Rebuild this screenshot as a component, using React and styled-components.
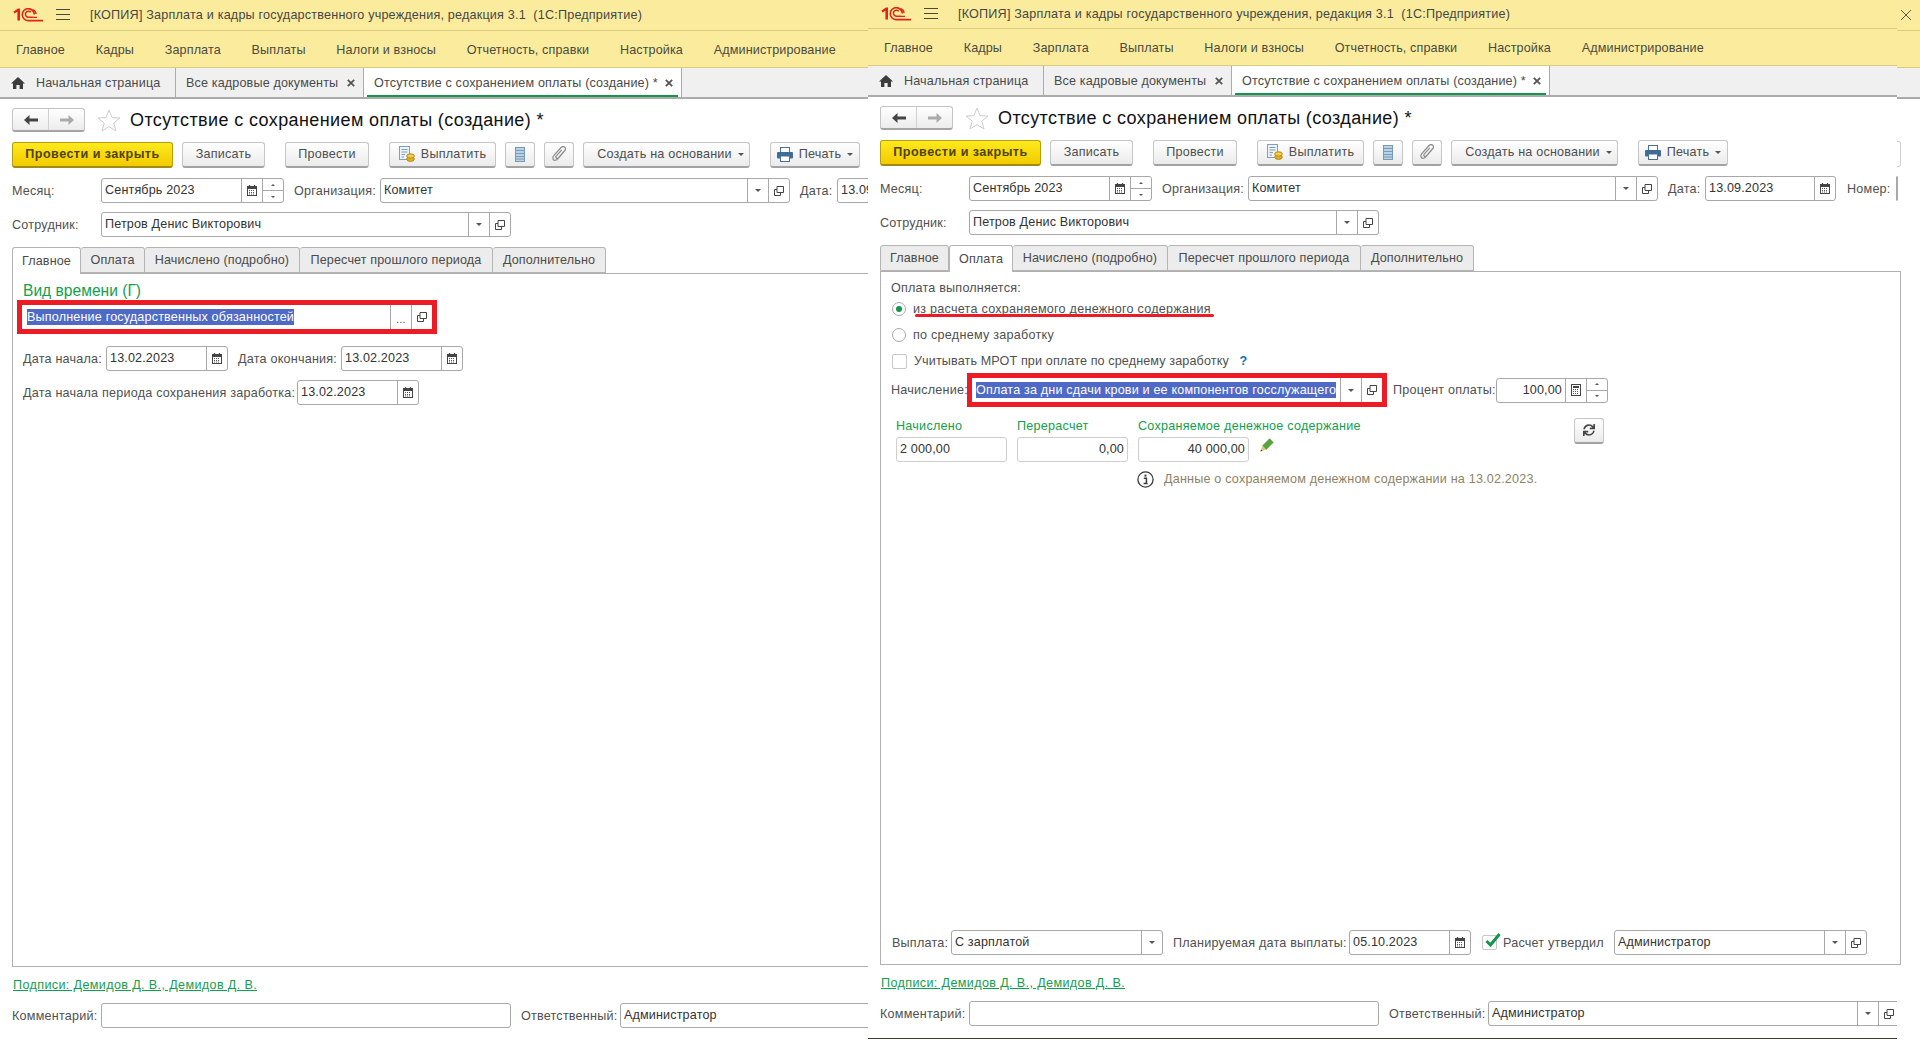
import React from 'react';
import styled, { createGlobalStyle } from 'styled-components';
import { FaSync } from 'react-icons/fa';

const GlobalStyle = createGlobalStyle`
  html, body {
    margin: 0;
    padding: 0;
    background: #fff;
    overflow: hidden;
  }
  body {
    font-family: "Liberation Sans", Arial, sans-serif;
    font-size: 12.6px;
    letter-spacing: 0.2px;
    color: #4a4a4a;
  }
  * {
    box-sizing: border-box;
  }
`;

const Page = styled.div`
  display: flex;
  width: 1920px;
  height: 1041px;
  overflow: hidden;
`;

const Pane = styled.div`
  flex: none;
  width: ${props => props.$w}px;
  height: 1041px;
  display: flex;
  flex-direction: column;
  overflow: ${props => (props.$clip ? 'hidden' : 'visible')};
  position: relative;
  z-index: ${props => props.$z || 0};
`;

const Strip = styled.div`
  flex: none;
  width: 23px;
  display: flex;
  flex-direction: column;
`;

const TitleBar = styled.div`
  flex: none;
  height: ${props => props.$h}px;
  background: #fbec9d;
  border-bottom: 1px solid #d9cb80;
  display: flex;
  align-items: center;
  padding-left: ${props => props.$pl || 13}px;
`;

const WindowTitle = styled.span`
  margin-left: 20px;
  white-space: pre;
  color: #464646;
  letter-spacing: 0.2px;
`;

const MenuBar = styled.div`
  flex: none;
  height: 37px;
  background: #fbec9d;
  border-bottom: 1px solid #d9cb80;
  display: flex;
  align-items: center;
  padding: 2px 0 0 16px;
  gap: 30.8px;
`;

const MenuItem = styled.span`
  white-space: nowrap;
  color: #4a4a40;
  letter-spacing: 0.11px;
`;

const TabBar = styled.div`
  flex: none;
  height: 31px;
  background: #f0f0f0;
  border-bottom: 2px solid #ababab;
  display: flex;
`;

const PageTab = styled.div`
  position: relative;
  flex: none;
  width: ${props => props.$w}px;
  display: flex;
  align-items: center;
  border-right: 1px solid #ababab;
  padding: 1px ${props => props.$pr || 8}px 0 ${props => props.$pl || 10}px;
  white-space: pre;
  color: #4a4a4a;
  background: ${props => (props.$active ? '#fff' : 'transparent')};
  &::after {
    content: '';
    display: ${props => (props.$active ? 'block' : 'none')};
    position: absolute;
    left: 3px;
    right: 3px;
    bottom: 0;
    height: 2px;
    background: #12964c;
  }
`;

const TabText = styled.span`
  flex: 1;
  letter-spacing: 0.14px;
`;

const Form = styled.div`
  flex: 1;
  display: flex;
  flex-direction: column;
  padding: 9px 0 0 12px;
`;

const NavRow = styled.div`
  flex: none;
  height: 24px;
  display: flex;
  align-items: center;
`;

const NavGroup = styled.div`
  width: 73px;
  height: 24px;
  display: flex;
  border: 1px solid #c4c4c4;
  border-bottom: 2px solid #a4a4a4;
  border-radius: 3px;
  background: linear-gradient(#fff, #ececec);
`;

const NavCell = styled.div`
  flex: 1;
  display: flex;
  align-items: center;
  justify-content: center;
  & + & {
    border-left: 1px solid #d0d0d0;
  }
`;

const FormTitle = styled.h1`
  margin: 0 0 0 9px;
  font-weight: normal;
  font-size: 18px;
  letter-spacing: 0.39px;
  color: #111;
  white-space: nowrap;
`;

const StarWrap = styled.span`
  margin-left: 12px;
  display: flex;
`;

const Toolbar = styled.div`
  flex: none;
  display: flex;
  height: 26px;
  margin-top: 10px;
`;

const Btn = styled.div`
  flex: none;
  width: ${props => props.$w}px;
  margin-left: ${props => props.$ml || 0}px;
  height: 26px;
  display: flex;
  align-items: center;
  justify-content: center;
  gap: 6px;
  padding: 0 0 1px ${props => props.$pl || 0}px;
  border: 1px solid #c6c6c6;
  border-bottom: 2px solid #a2a2a2;
  border-radius: 3px;
  background: linear-gradient(#fff, #ebebeb);
  color: #4e4e4e;
  white-space: nowrap;
`;

const PrimaryBtn = styled(Btn)`
  border: 1px solid #b59f10;
  border-bottom: 2px solid #a08c10;
  background: linear-gradient(#fdea1e, #f3ca00);
  color: #4f4300;
  font-weight: bold;
  letter-spacing: 0.45px;
`;

const Row = styled.div`
  flex: none;
  display: flex;
  align-items: center;
  gap: 6px;
  height: 25px;
  margin-top: ${props => props.$mt || 0}px;
  margin-left: ${props => props.$ml || 0}px;
`;

const TallRow = styled(Row)`
  height: 34px;
`;

const FooterRow = styled(Row)`
  width: ${props => props.$w}px;
  overflow: hidden;
`;

const Label = styled.span`
  flex: none;
  width: ${props => props.$w}px;
  margin-left: ${props => props.$ml || 0}px;
  white-space: nowrap;
  color: #505050;
  letter-spacing: 0.21px;
`;

const FieldBox = styled.div`
  flex: none;
  width: ${props => props.$w}px;
  height: 25px;
  display: flex;
  border: 1px solid ${props => (props.$light ? '#cfcfcf' : '#a8a8a8')};
  border-radius: 3px;
  background: #fff;
`;

const FieldText = styled.div`
  flex: 1;
  min-width: 0;
  overflow: hidden;
  white-space: nowrap;
  padding: 0 3px;
  line-height: 22px;
  color: #333;
  text-align: ${props => (props.$right ? 'right' : 'left')};
  letter-spacing: 0.14px;
`;

const FieldBtn = styled.div`
  flex: none;
  width: 21px;
  display: flex;
  align-items: center;
  justify-content: center;
  border-left: 1px solid #a8a8a8;
`;

const Spin = styled.div`
  flex: none;
  width: 21px;
  display: flex;
  flex-direction: column;
  border-left: 1px solid #a8a8a8;
`;

const SpinCell = styled.div`
  flex: 1;
  display: flex;
  align-items: center;
  justify-content: center;
  & + & {
    border-top: 1px solid #a8a8a8;
  }
`;

const SubTabs = styled.div`
  flex: none;
  display: flex;
  height: 27px;
  margin-top: 10px;
  position: relative;
  z-index: 1;
`;

const SubTab = styled.div`
  flex: none;
  width: ${props => props.$w}px;
  height: ${props => (props.$active ? 27 : 26)}px;
  display: flex;
  align-items: center;
  justify-content: center;
  border: 1px solid #b4b4b4;
  border-left-width: ${props => (props.$first || props.$active ? 1 : 0)}px;
  border-bottom: ${props => (props.$active ? 'none' : '1px solid #b4b4b4')};
  border-radius: 3px 3px 0 0;
  background: ${props => (props.$active ? '#fff' : '#ececec')};
  color: #4a4a4a;
  white-space: nowrap;
  letter-spacing: 0.12px;
`;

const Panel = styled.div`
  flex: none;
  width: ${props => props.$w}px;
  height: 694px;
  margin-top: -1px;
  display: flex;
  flex-direction: column;
  border: 1px solid #b0b0b0;
  padding: ${props => props.$pt}px 10px 9px;
`;

const GroupTitle = styled.div`
  height: 19px;
  line-height: 19px;
  color: #12a04e;
  font-size: 15.6px;
  letter-spacing: 0;
`;

const RedBox = styled.div`
  flex: none;
  width: 420px;
  height: 34px;
  margin-left: ${props => props.$ml || 0}px;
  display: flex;
  border: 5px solid #ed1c24;
  background: #fff;
`;

const RedText = styled.div`
  flex: 1;
  min-width: 0;
  white-space: nowrap;
  padding: 4px 3px 0 ${props => props.$pl || 5}px;
  line-height: 16px;
`;

const Selected = styled.span`
  display: inline-block;
  max-width: 100%;
  overflow: hidden;
  vertical-align: top;
  background: #4f69c6;
  color: #fff;
  letter-spacing: 0.17px;
`;

const Dots = styled.span`
  color: #555;
  font-size: 11px;
  padding-top: 4px;
`;

const Caption = styled.div`
  height: 16px;
  line-height: 16px;
  color: #505050;
`;

const OptionRow = styled.div`
  position: relative;
  height: 26px;
  display: flex;
  align-items: center;
  gap: 7px;
  margin-left: 1px;
  color: #505050;
  letter-spacing: ${props => props.$ls || 0.25}px;
  white-space: pre;
`;

const Radio = styled.span`
  flex: none;
  width: 14px;
  height: 14px;
  border: 1px solid #a8a8a8;
  border-radius: 50%;
  display: flex;
  align-items: center;
  justify-content: center;
  &::after {
    content: '';
    display: ${props => (props.$on ? 'block' : 'none')};
    width: 6px;
    height: 6px;
    border-radius: 50%;
    background: #12964c;
  }
`;

const CheckBox = styled.span`
  flex: none;
  width: 15px;
  height: 15px;
  margin-left: ${props => props.$ml || 0}px;
  border: 1px solid #c8c8c8;
  border-radius: 2px;
  display: flex;
  position: relative;
`;

const Underline = styled.span`
  position: absolute;
  left: 23px;
  top: 18px;
  width: 299px;
  height: 3px;
  border-radius: 2px;
  background: #ed1c24;
`;

const Help = styled.span`
  color: #0e6fb5;
  font-weight: bold;
`;

const SumRow = styled.div`
  flex: none;
  display: flex;
  margin: 11px 0 0 5px;
  gap: 10px;
`;

const SumCol = styled.div`
  flex: none;
  width: 111px;
  display: flex;
  flex-direction: column;
  gap: 3px;
`;

const GreenLabel = styled.div`
  height: 16px;
  line-height: 16px;
  color: #12a04e;
  white-space: nowrap;
  letter-spacing: 0.24px;
`;

const PencilCell = styled.div`
  flex: none;
  width: 14px;
  margin-left: 1px;
  padding-top: 20px;
`;

const InfoRow = styled.div`
  flex: none;
  display: flex;
  align-items: center;
  gap: 10px;
  height: 18px;
  margin: 8px 0 0 246px;
  color: #8d8264;
  letter-spacing: 0.19px;
`;

const BottomRow = styled(Row)`
  margin-top: auto;
`;

const FooterLink = styled.a`
  flex: none;
  height: 16px;
  line-height: 15px;
  margin: 11px 0 9px 1px;
  color: #12a04e;
  text-decoration: underline;
  white-space: nowrap;
  letter-spacing: 0.36px;
`;

const BottomRule = styled.div`
  flex: none;
  height: 1px;
  margin: 12px 0 0 -12px;
  background: #3b3b2c;
`;

const GhostBtn = styled.div`
  width: 4px;
  height: 26px;
  margin-top: 42px;
  border: 1px solid #d0d0d0;
  border-left: none;
  border-radius: 0 3px 3px 0;
`;

const Spacer = styled.span`
  flex: none;
  width: ${props => props.$w}px;
`;

/* иконки */
const Logo = () => (
  <svg width="30" height="14" viewBox="0 0 30 14" fill="none">
    <path d="M0.5 3.5 L5 0.6 H7 V12.6 H4.4 V3.8 L1.5 5.5 Z" fill="#e2231a" />
    <path d="M19.5 9.2 H15 A3 3 0 1 1 17.8 4.4" stroke="#e2231a" strokeWidth="1.5" />
    <path d="M21.3 6.5 A6 6 0 1 0 15 12.6 H30" stroke="#e2231a" strokeWidth="1.6" />
    <path d="M24 9.4 H19 M19.6 1.6 A5 5 0 0 1 23 6" stroke="#e2231a" strokeWidth="1.4" />
  </svg>
);

const Burger = () => (
  <svg width="14" height="12" viewBox="0 0 14 12">
    <path d="M0 .5H14M0 5.5H14M0 10.5H14" stroke="#4a4a3c" strokeWidth="1" />
  </svg>
);

const HomeIcon = () => (
  <svg width="14" height="12" viewBox="0 0 14 12" style={{ marginRight: 11 }}>
    <path d="M7 0 L14 6.4 H12 V12 H8.6 V8 H5.4 V12 H2 V6.4 H0 Z" fill="#3c3c3c" />
  </svg>
);

const CloseIcon = () => (
  <svg width="8" height="8" viewBox="0 0 8 8">
    <path d="M.8 .8L7.2 7.2M7.2 .8L.8 7.2" stroke="#555" strokeWidth="1.8" />
  </svg>
);

const BigClose = () => (
  <svg width="10" height="10" viewBox="0 0 10 10" style={{ marginLeft: 3 }}>
    <path d="M0 0L10 10M10 0L0 10" stroke="#5a5a50" strokeWidth="1" />
  </svg>
);

const ArrowIcon = ({ color, flip }) => (
  <svg width="14" height="10" viewBox="0 0 14 10" style={{ transform: flip ? 'scaleX(-1)' : 'none' }}>
    <path d="M5.5 0 V3.5 H14 V6.5 H5.5 V10 L0 5 Z" fill={color} />
  </svg>
);

const StarIcon = () => (
  <svg width="24" height="23" viewBox="0 0 24 23">
    <path d="M12 1 L15 8.6 L23 9 L16.8 14 L19 22 L12 17.6 L5 22 L7.2 14 L1 9 L9 8.6 Z" fill="#fff" stroke="#cdcdcd" strokeWidth="1" />
  </svg>
);

const PayIcon = () => (
  <svg width="16" height="16" viewBox="0 0 16 16">
    <rect x=".5" y=".5" width="10" height="13" fill="#eef3f8" stroke="#7f9fbd" />
    <path d="M2.5 3.5H8.5M2.5 6H8.5M2.5 8.5H6M2.5 11H5" stroke="#7f9fbd" />
    <ellipse cx="11.5" cy="13" rx="3.8" ry="2.4" fill="#e3b023" stroke="#b78612" />
    <ellipse cx="11.5" cy="10" rx="3.8" ry="2.2" fill="#f4ce4a" stroke="#b78612" />
  </svg>
);

const ListIcon = () => (
  <svg width="10" height="15" viewBox="0 0 10 15">
    <rect x=".5" y=".5" width="9" height="14" fill="#b9d3e6" stroke="#7a99b3" />
    <path d="M1 3.5H9M1 6.5H9M1 9.5H9M1 12H9" stroke="#7a99b3" />
  </svg>
);

const ClipIcon = () => (
  <svg width="15" height="16" viewBox="0 0 15 16" fill="none">
    <path d="M13.5 3.8 L6 12.6 C4.6 14.4 2.2 14.8 1.4 13.6 C.4 12.4 1 10.6 2.2 9.2 L8.6 2 C10 .4 11.8 .4 12.8 1.2 C13.8 2.2 13.6 3.6 12.4 5 L6.6 11.6 C5.8 12.4 4.8 12.6 4.2 12 C3.6 11.4 3.8 10.4 4.6 9.6 L9.8 3.8" stroke="#8a8a8a" strokeWidth="1.2" />
  </svg>
);

const PrintIcon = () => (
  <svg width="16" height="15" viewBox="0 0 16 15">
    <rect x="3.5" y=".5" width="9" height="5" fill="#fff" stroke="#4a6f94" />
    <rect x="0" y="5" width="16" height="6.5" rx="1" fill="#3f6c97" />
    <rect x="3.5" y="9" width="9" height="5.5" fill="#fff" stroke="#4a6f94" />
  </svg>
);

const SmallCaret = ({ up }) => (
  <svg width="4" height="2" viewBox="0 0 4 2" style={{ transform: up ? 'rotate(180deg)' : 'none' }}>
    <path d="M0 0H4L2 2Z" fill="#555" />
  </svg>
);

const Caret = () => (
  <svg width="6" height="3" viewBox="0 0 6 3">
    <path d="M0 0H6L3 3Z" fill="#555" />
  </svg>
);

const CalendarIcon = () => (
  <svg width="10" height="11" viewBox="0 0 10 11">
    <path d="M2.5 0V2M7.5 0V2" stroke="#444" strokeWidth="1.2" />
    <rect x=".5" y="1.5" width="9" height="9" fill="#fff" stroke="#444" />
    <rect x="1" y="2" width="8" height="2" fill="#444" />
    <path d="M2 5.5H8M2 7.5H8M2 9H8" stroke="#555" strokeDasharray="1 1" />
  </svg>
);

const CalcIcon = () => (
  <svg width="10" height="12" viewBox="0 0 10 12">
    <rect x=".5" y=".5" width="9" height="11" fill="#fff" stroke="#444" />
    <rect x="2" y="2" width="6" height="2" fill="#444" />
    <path d="M2 5.5H8M2 7.5H8M2 9.5H8" stroke="#555" strokeDasharray="1 1" />
  </svg>
);

const OpenIcon = () => (
  <svg width="10" height="10" viewBox="0 0 10 10" fill="none">
    <path d="M3 6.5V.5H9.5V6.5H3Z" stroke="#444" />
    <path d="M3 3.5H.5V9.5H6.5V7" stroke="#444" />
  </svg>
);

const PencilIcon = () => (
  <svg width="14" height="14" viewBox="0 0 14 14">
    <path d="M2.6 7.8 L9.6 .8 L13.2 4.4 L6.2 11.4 Z" fill="#5aa53a" stroke="#3c7d22" strokeWidth=".6" />
    <path d="M2.6 7.8 L6.2 11.4 L.4 13.6 Z" fill="#e9c27a" />
    <path d="M.4 13.6 L1.2 11.4 L2.6 12.8 Z" fill="#444" />
  </svg>
);

const InfoIcon = () => (
  <svg width="17" height="17" viewBox="0 0 17 17" fill="none">
    <circle cx="8.5" cy="8.5" r="7.6" stroke="#3a3a3a" strokeWidth="1.3" />
    <rect x="7.5" y="3.6" width="2" height="2" fill="#3a3a3a" />
    <path d="M6.8 7.2H9.4V12M6.6 12.6H10.6" stroke="#3a3a3a" strokeWidth="1.5" />
  </svg>
);

const CheckMark = () => (
  <svg width="19" height="17" viewBox="0 0 19 17" style={{ position: 'absolute', left: 1, top: -4 }}>
    <path d="M2.5 9 L6.5 13 L15.5 2" fill="none" stroke="#12964c" strokeWidth="3" />
  </svg>
);

const Field = ({ w, text, right, light, date, spin, drop, calc, open }) => (
  <FieldBox $w={w} $light={light}>
    <FieldText $right={right}>{text}</FieldText>
    {date && <FieldBtn><CalendarIcon /></FieldBtn>}
    {calc && <FieldBtn><CalcIcon /></FieldBtn>}
    {spin && (
      <Spin>
        <SpinCell><SmallCaret up /></SpinCell>
        <SpinCell><SmallCaret /></SpinCell>
      </Spin>
    )}
    {drop && <FieldBtn><Caret /></FieldBtn>}
    {open && <FieldBtn><OpenIcon /></FieldBtn>}
  </FieldBox>
);

const menuItems = ['Главное', 'Кадры', 'Зарплата', 'Выплаты', 'Налоги и взносы', 'Отчетность, справки', 'Настройка', 'Администрирование'];

const subTabs = [
  { name: 'Главное', w: 69 },
  { name: 'Оплата', w: 64 },
  { name: 'Начислено (подробно)', w: 155 },
  { name: 'Пересчет прошлого периода', w: 193 },
  { name: 'Дополнительно', w: 113 },
];

const Chrome = ({ titleH }) => (
  <>
    <TitleBar $h={titleH}>
      <Logo />
      <Spacer $w={13} />
      <Burger />
      <WindowTitle>[КОПИЯ] Зарплата и кадры государственного учреждения, редакция 3.1  (1С:Предприятие)</WindowTitle>
    </TitleBar>
    <MenuBar>
      {menuItems.map(item => <MenuItem key={item}>{item}</MenuItem>)}
    </MenuBar>
    <TabBar>
      <PageTab $w={176} $pl={11}><HomeIcon /><TabText>Начальная страница</TabText></PageTab>
      <PageTab $w={188}><TabText>Все кадровые документы</TabText><CloseIcon /></PageTab>
      <PageTab $w={318} $active $pr={8}><TabText>Отсутствие с сохранением оплаты (создание) *</TabText><CloseIcon /></PageTab>
    </TabBar>
  </>
);

const Head = ({ full }) => (
  <>
    <NavRow>
      <NavGroup>
        <NavCell><ArrowIcon color="#444" /></NavCell>
        <NavCell><ArrowIcon color="#aaa" flip /></NavCell>
      </NavGroup>
      <StarWrap><StarIcon /></StarWrap>
      <FormTitle>Отсутствие с сохранением оплаты (создание) *</FormTitle>
    </NavRow>
    <Toolbar>
      <PrimaryBtn $w={161}>Провести и закрыть</PrimaryBtn>
      <Btn $w={83} $ml={9}>Записать</Btn>
      <Btn $w={84} $ml={20}>Провести</Btn>
      <Btn $w={107} $ml={20}><PayIcon />Выплатить</Btn>
      <Btn $w={30} $ml={9}><ListIcon /></Btn>
      <Btn $w={30} $ml={9}><ClipIcon /></Btn>
      <Btn $w={167} $ml={9} $pl={8}>Создать на основании<Caret /></Btn>
      <Btn $w={90} $ml={20}><PrintIcon />Печать<Caret /></Btn>
    </Toolbar>
    <Row $mt={10}>
      <Label $w={83}>Месяц:</Label>
      <Field w={183} text="Сентябрь 2023" date spin />
      <Label $w={80} $ml={4}>Организация:</Label>
      <Field w={410} text="Комитет" drop open />
      <Label $w={31} $ml={4}>Дата:</Label>
      <Field w={full ? 131 : 33} text="13.09.2023" date={full} />
      {full && <Label $w={43} $ml={5}>Номер:</Label>}
      {full && <Field w={2} />}
    </Row>
    <Row $mt={9}>
      <Label $w={83}>Сотрудник:</Label>
      <Field w={410} text="Петров Денис Викторович" drop open />
    </Row>
  </>
);

const Tabs = ({ active }) => (
  <SubTabs>
    {subTabs.map((t, i) => (
      <SubTab key={t.name} $w={t.w} $first={i === 0} $active={i === active}>{t.name}</SubTab>
    ))}
  </SubTabs>
);

const Footer = ({ w }) => (
  <>
    <FooterLink>Подписи: Демидов Д. В., Демидов Д. В.</FooterLink>
    <FooterRow $w={w}>
      <Label $w={83}>Комментарий:</Label>
      <Field w={410} />
      <Label $w={93} $ml={4}>Ответственный:</Label>
      <Field w={412} text="Администратор" drop open />
    </FooterRow>
  </>
);

const LeftWindow = () => (
  <Pane $w={868} $clip>
    <Chrome titleH={31} />
    <Form>
      <Head />
      <Tabs active={0} />
      <Panel $w={900} $pt={7}>
        <GroupTitle>Вид времени (Г)</GroupTitle>
        <RedBox $ml={-6}>
          <RedText><Selected>Выполнение государственных обязанностей</Selected></RedText>
          <FieldBtn><Dots>...</Dots></FieldBtn>
          <FieldBtn><OpenIcon /></FieldBtn>
        </RedBox>
        <Row $mt={12}>
          <Label $w={77}>Дата начала:</Label>
          <Field w={122} text="13.02.2023" date />
          <Label $w={97} $ml={4}>Дата окончания:</Label>
          <Field w={122} text="13.02.2023" date />
        </Row>
        <Row $mt={9}>
          <Label $w={268}>Дата начала периода сохранения заработка:</Label>
          <Field w={122} text="13.02.2023" date />
        </Row>
      </Panel>
      <Footer w={856} />
    </Form>
  </Pane>
);

const RightWindow = () => (
  <Pane $w={1029} $z={1}>
    <Chrome titleH={29} />
    <Form>
      <Head full />
      <Tabs active={1} />
      <Panel $w={1021} $pt={8}>
        <Caption>Оплата выполняется:</Caption>
        <OptionRow>
          <Radio $on />из расчета сохраняемого денежного содержания<Underline />
        </OptionRow>
        <OptionRow><Radio />по среднему заработку</OptionRow>
        <OptionRow $ls={0.12}><CheckBox />Учитывать МРОТ при оплате по среднему заработку <Help>?</Help></OptionRow>
        <TallRow $mt={-1}>
          <Label $w={70}>Начисление:</Label>
          <RedBox>
            <RedText $pl={4}><Selected>Оплата за дни сдачи крови и ее компонентов госслужащего</Selected></RedText>
            <FieldBtn><Caret /></FieldBtn>
            <FieldBtn><OpenIcon /></FieldBtn>
          </RedBox>
          <Label $w={97}>Процент оплаты:</Label>
          <Field w={112} text="100,00" right calc spin />
        </TallRow>
        <SumRow>
          <SumCol>
            <GreenLabel>Начислено</GreenLabel>
            <Field w={111} text="2 000,00" light />
          </SumCol>
          <SumCol>
            <GreenLabel>Перерасчет</GreenLabel>
            <Field w={111} text="0,00" right light />
          </SumCol>
          <SumCol>
            <GreenLabel>Сохраняемое денежное содержание</GreenLabel>
            <Field w={111} text="40 000,00" right light />
          </SumCol>
          <PencilCell><PencilIcon /></PencilCell>
          <Btn $w={30} $ml={290}><FaSync size={12} color="#444" /></Btn>
        </SumRow>
        <InfoRow><InfoIcon />Данные о сохраняемом денежном содержании на 13.02.2023.</InfoRow>
        <BottomRow $ml={1}>
          <Label $w={53}>Выплата:</Label>
          <Field w={212} text="С зарплатой" drop />
          <Label $w={170} $ml={4}>Планируемая дата выплаты:</Label>
          <Field w={122} text="05.10.2023" date />
          <CheckBox $ml={5}><CheckMark /></CheckBox>
          <Label $w={105}>Расчет утвердил</Label>
          <Field w={253} text="Администратор" drop open />
        </BottomRow>
      </Panel>
      <Footer w={1017} />
      <BottomRule />
    </Form>
  </Pane>
);

const RightStrip = () => (
  <Strip>
    <TitleBar $h={31} $pl={1}><BigClose /></TitleBar>
    <MenuBar />
    <TabBar />
    <GhostBtn />
  </Strip>
);

export default function App() {
  return (
    <Page>
      <GlobalStyle />
      <LeftWindow />
      <RightWindow />
      <RightStrip />
    </Page>
  );
}
